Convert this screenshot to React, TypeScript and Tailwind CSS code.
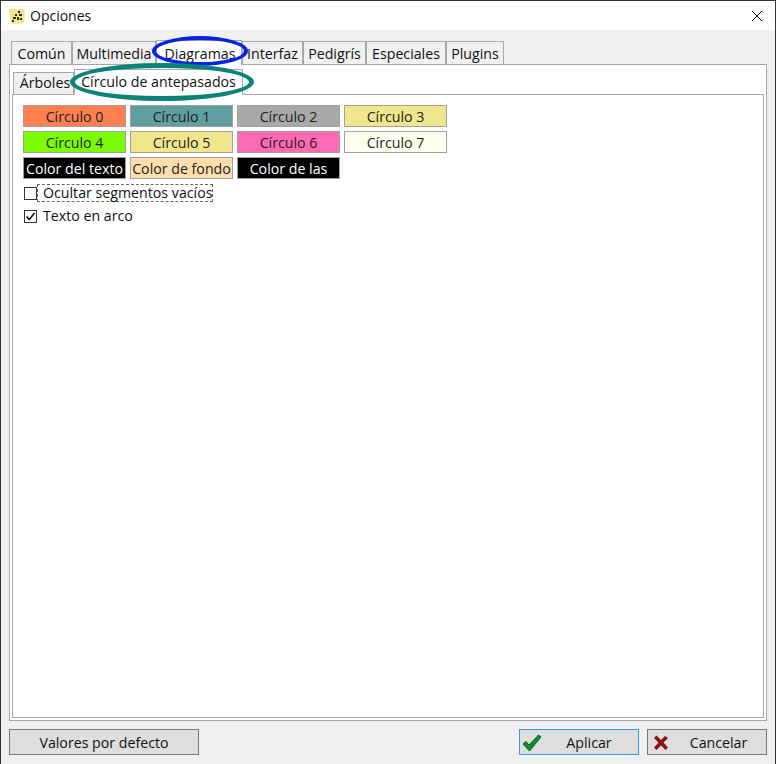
import React from "react";

const FONT = "font-['Open_Sans','Noto_Sans',sans-serif]";

const OUTER_TABS = [
  { label: "Común", w: "w-[61px]" },
  { label: "Multimedia", w: "w-[84px]" },
  { label: "Diagramas", w: "w-[86px]", active: true },
  { label: "Interfaz", w: "w-[61px]" },
  { label: "Pedigrís", w: "w-[63px]" },
  { label: "Especiales", w: "w-[80px]" },
  { label: "Plugins", w: "w-[58px]" },
];

const SWATCHES = [
  { label: "Círculo 0", cls: "bg-[#ff7f50] text-[#222]" },
  { label: "Círculo 1", cls: "bg-[#5f9ea0] text-[#222]" },
  { label: "Círculo 2", cls: "bg-[#a9a9a9] text-[#222]" },
  { label: "Círculo 3", cls: "bg-[#f0e68c] text-[#222]" },
  { label: "Círculo 4", cls: "bg-[#7cfc00] text-[#222]" },
  { label: "Círculo 5", cls: "bg-[#f0e68c] text-[#222]" },
  { label: "Círculo 6", cls: "bg-[#ff69b4] text-[#222]" },
  { label: "Círculo 7", cls: "bg-[#fffff0] text-[#222]" },
  { label: "Color del texto", cls: "bg-black text-white" },
  { label: "Color de fondo", cls: "bg-[#ffdead] text-[#222]" },
  { label: "Color de las", cls: "bg-black text-white" },
];

function AppIcon() {
  return (
    <svg width="16" height="16" viewBox="0 0 16 16" className="shrink-0">
      <path d="M0 1h15l1 5-1 9-13 1-1-7z" fill="#f2e48c" />
      <path d="M9 3h2v2H9zM6 6h2v2H6zM10 6h3v2h-3zM4 9h3v2H4zM8 9h2v3H8zM3 12h2v2H3zM11 10h2v2h-2z" fill="#2a2a20" />
    </svg>
  );
}

export default function App() {
  return (
    <div className={`${FONT} relative flex h-[764px] w-[776px] flex-col overflow-hidden border-t border-l border-r border-[#333] bg-[#f0f0f0] text-[14.2px] text-[#111]`}>
      {/* Title bar */}
      <div className="flex h-[29px] shrink-0 items-center bg-white pl-[8px] pr-[11px]">
        <AppIcon />
        <span className="ml-[5px] flex-1 text-[14px]">Opciones</span>
        <svg width="12" height="12" viewBox="0 0 12 12" className="mr-[1px]">
          <path d="M1 1l10 10M11 1L1 11" stroke="#111" strokeWidth="1" fill="none" />
        </svg>
      </div>

      {/* Outer tabs */}
      <div className="flex h-[34px] shrink-0 items-end pl-[10px]">
        {OUTER_TABS.map((t) => (
          <div
            key={t.label}
            className={[
              "flex items-center justify-center whitespace-nowrap border border-b-0 border-[#a8a8a8] pt-px",
              t.w,
              t.active ? "relative z-10 -mb-px h-[25px] bg-white pl-[2px]" : "h-[23px] bg-[#f0f0f0]",
            ].join(" ")}
          >
            {t.label}
          </div>
        ))}
      </div>

      {/* Outer panel */}
      <div className="mx-[8px] flex h-[657px] shrink-0 flex-col border border-[#a8a8a8] bg-white p-[2px]">
        <div className="flex h-[27px] shrink-0 items-end pl-[1px]">
          <div className="flex h-[22px] w-[61px] items-center justify-center whitespace-nowrap border border-b-0 border-[#a8a8a8] bg-[#f0f0f0] pb-px pl-[3px]">
            Árboles
          </div>
          <div className="relative z-10 -mb-px flex h-[26px] w-[169px] items-center justify-center border border-b-0 border-[#a8a8a8] bg-white pb-px">
            Círculo de antepasados
          </div>
        </div>

        <div className="flex-1 border border-[#a8a8a8] bg-white pl-[10px] pt-[10px]">
          <div className="grid w-[424px] grid-cols-[103px_103px_103px_103px] gap-x-[4px] gap-y-[4px]">
            {SWATCHES.map((s) => (
              <div
                key={s.label}
                className={`flex h-[22px] items-center justify-center whitespace-nowrap border border-[#a0a0a0] pt-px ${s.cls}`}
              >
                {s.label}
              </div>
            ))}
          </div>

          <div className="mt-[4px] flex h-[20px] items-center">
            <span className="ml-[1px] h-[13px] w-[13px] border border-[#333] bg-white" />
            <span className="flex h-[18px] w-[176px] items-center whitespace-nowrap border border-dashed border-[#666] pl-[5px]">
              Ocultar segmentos vacíos
            </span>
          </div>
          <div className="mt-[3px] flex h-[20px] items-center">
            <span className="ml-[1px] flex h-[13px] w-[13px] items-center justify-center border border-[#333] bg-white">
              <svg width="11" height="11" viewBox="0 0 11 11">
                <path d="M1.500 5.500l2.800 3L9.500 2" stroke="#111" strokeWidth="1.7" fill="none" />
              </svg>
            </span>
            <span className="ml-[6px] whitespace-nowrap">Texto en arco</span>
          </div>
        </div>
      </div>

      {/* Footer buttons */}
      <div className="flex flex-1 items-start pl-[8px] pr-[8px] pt-[8px]">
        <div className="flex h-[26px] w-[190px] items-center justify-center border border-[#777] bg-[#dedede] pt-px">
          Valores por defecto
        </div>
        <div className="ml-auto flex h-[26px] w-[120px] items-center border border-[#3a96ee] bg-[#dedede] pl-[2px] pt-px">
          <svg width="20" height="18" viewBox="0 0 20 18" className="shrink-0">
            <path d="M1 10l3-2.500 3 3.500L16.500 1l2.500 2L7.500 17z" fill="#0a9a1a" stroke="#123f4a" strokeWidth="0.9" />
          </svg>
          <span className="flex-1 pr-[2px] text-center">Aplicar</span>
        </div>
        <div className="ml-[8px] flex h-[26px] w-[120px] items-center border border-[#777] bg-[#dedede] pl-[5px] pt-px">
          <svg width="16" height="17" viewBox="0 0 16 16" className="shrink-0">
            <path d="M1 3.500L3.500 1 8 5.500 12 1.500l3 2L10.500 8 15 13l-2.500 2.500L8 11l-4.500 4.500L1 13l4.500-5z" fill="#8f1212" />
          </svg>
          <span className="flex-1 pl-[2px] text-center">Cancelar</span>
        </div>
      </div>

      {/* Hand-drawn highlight ellipses over the tabs */}
      <span className="pointer-events-none absolute left-[151px] top-[35px] z-20 h-[30px] w-[96px] rounded-[50%] border-[4px] border-[#0a22e6]" />
      <span className="pointer-events-none absolute left-[69px] top-[62px] z-20 h-[38px] w-[184px] rounded-[50%] border-[5px] border-[#0b8378]" />
    </div>
  );
}
